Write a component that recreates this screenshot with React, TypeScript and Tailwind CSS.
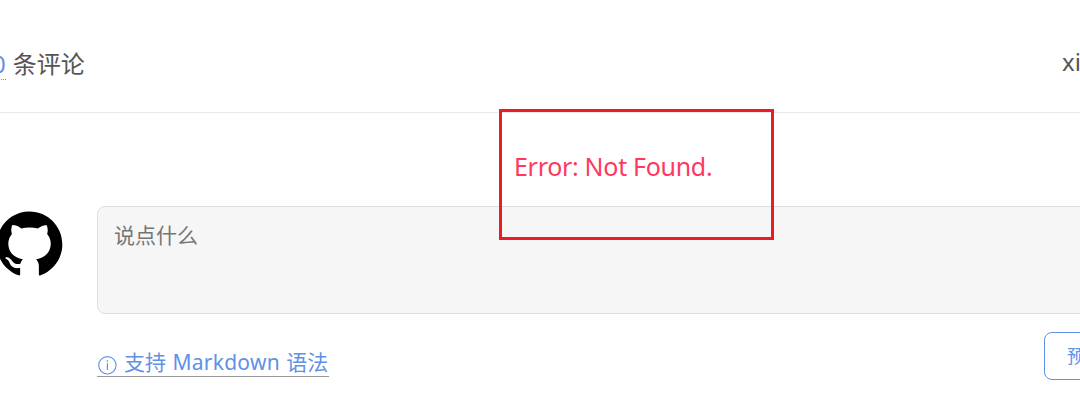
function GithubMark() {
  return (
    <svg viewBox="0 0 1024 1024" className="-ml-[8px] h-[75px] w-[75px] shrink-0 fill-black" aria-hidden="true">
      <path d="M64 524C64 719.602 189.332 885.987 364.113 947.017 387.658 953 384 936.115 384 924.767L384 847.107C248.118 863.007 242.674 773.052 233.5 758.001 215 726.501 171.5 718.501 184.5 703.501 215.5 687.501 247 707.501 283.5 761.501 309.956 800.642 361.366 794.075 387.658 787.497 393.403 763.997 405.637 743.042 422.353 726.638 281.774 701.609 223 615.67 223 513.5 223 464.053 239.322 418.406 271.465 381.627 251.142 320.928 273.421 269.19 276.337 261.415 334.458 256.131 394.888 302.993 399.549 306.685 432.663 297.835 470.341 293 512.5 293 554.924 293 592.81 297.896 626.075 306.853 637.426 298.219 693.46 258.054 747.5 262.966 750.382 270.652 772.185 321.292 753.058 381.083 785.516 417.956 802 463.809 802 513.5 802 615.874 742.99 701.953 601.803 726.786 625.381 750.003 640 782.295 640 818.008L640 930.653C640.752 939.668 640 948.665 655.086 948.665 832.344 888.962 960 721.389 960 524 960 276.576 759.424 76 512 76 264.577 76 64 276.576 64 524Z" />
    </svg>
  );
}

function InfoIcon() {
  return (
    <svg viewBox="0 0 20 20" className="mt-[5px] h-5 w-5 shrink-0" fill="none" stroke="#6190e8" aria-hidden="true">
      <circle cx="10.4" cy="10.3" r="8.7" strokeWidth="1.1" />
      <path d="M10.4 8.2v6.8" strokeWidth="1.2" />
      <path d="M10.4 5.2v1.5" strokeWidth="1.4" />
    </svg>
  );
}

export default function App() {
  return (
    <main className="relative flex h-[404px] w-full flex-col overflow-hidden bg-white font-['Noto_Sans','Noto_Sans_CJK_SC',sans-serif]">
      <header className="flex h-[113px] shrink-0 items-start justify-between border-b border-[#e9e9e9] text-2xl text-[#555]">
        <div className="flex pt-[49px] leading-[30px] whitespace-nowrap">
          <a className="-ml-[8px] mr-[7px] h-[31px] border-b border-dotted border-[#6190e8] text-[#6190e8]">0</a>
          <span>条评论</span>
        </div>
        <span className="w-[18px] overflow-hidden pt-[47px] leading-[30px] whitespace-nowrap">xi</span>
      </header>

      <p className="flex h-[93px] shrink-0 items-start pt-[36px] pl-[514px] text-[25px] leading-[34px] tracking-[-0.3px] text-[#ff3860]">
        Error: Not Found.
      </p>

      <section className="flex shrink-0 items-start">
        <GithubMark />
        <div className="ml-[30px] flex min-w-0 flex-1 flex-col">
          <textarea
            placeholder="说点什么"
            className="-mr-3 block h-[108px] resize-none rounded-lg border border-[#dedede] bg-[#f6f6f6] px-4 pt-[12px] text-[21px] leading-[32px] outline-none placeholder:text-[#757575]"
          />
          <div className="mt-[18px] flex items-start justify-between">
            <a className="mt-[14px] flex h-[31px] w-[232px] gap-[7px] border-b border-[#999] text-[21px] leading-[32px] whitespace-nowrap text-[#6190e8]">
              <span className="flex h-8 items-center"><InfoIcon /></span>
              <span className="[word-spacing:1px]">支持 <span className="tracking-[0.25px]">Markdown</span> 语法</span>
            </a>
            <button className="-mr-3 h-12 w-12 overflow-hidden rounded-lg border border-[#6190e8] pl-[22px] text-left text-lg whitespace-nowrap text-[#6190e8]">
              预览
            </button>
          </div>
        </div>
      </section>
      <div className="pointer-events-none absolute top-[109px] left-[499px] h-[131px] w-[275px] border-3 border-[#ed1c24]" />
    </main>
  );
}
